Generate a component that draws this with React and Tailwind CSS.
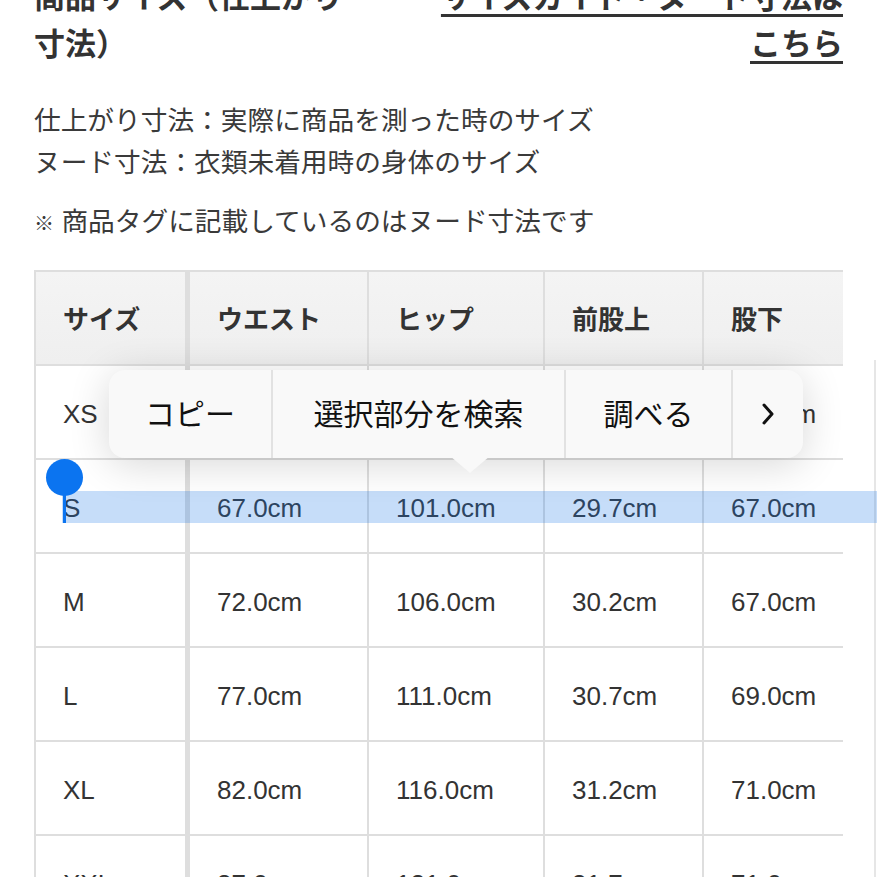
import React from "react";

const rows = [
  ["XS", "62.0cm", "96.0cm", "29.2cm", "65.0cm"],
  ["S", "67.0cm", "101.0cm", "29.7cm", "67.0cm"],
  ["M", "72.0cm", "106.0cm", "30.2cm", "67.0cm"],
  ["L", "77.0cm", "111.0cm", "30.7cm", "69.0cm"],
  ["XL", "82.0cm", "116.0cm", "31.2cm", "71.0cm"],
  ["XXL", "87.0cm", "121.0cm", "31.7cm", "71.0cm"],
];

const cols = "grid grid-cols-[154px_179px_176px_159px_160px]";

const Row = ({ cells, head }) => (
  <div
    className={`${cols} ${head ? "h-[94px] bg-gradient-to-b from-[#f4f4f4] to-[#efefef] font-bold" : "h-[94px]"} border-b-2 border-[#dedede]`}
  >
    {cells.map((c, i) => (
      <div
        key={i}
        className={`flex items-center pl-[27px] pt-[5px] ${i === 0 ? "border-r-[5px]" : "border-r-2"} border-[#dedede]`}
      >
        {c}
      </div>
    ))}
  </div>
);

const App = () => {
  return (
    <div
      className="relative w-[877px] h-[877px] overflow-hidden bg-white text-[#333]"
      style={{ fontFamily: '"Liberation Sans", "Noto Sans CJK JP", sans-serif' }}
    >
      <div className="px-[34px] mt-[-26px]">
        {/* heading */}
        <div className="flex justify-between text-[31px] font-bold leading-[47px]">
          <h2 className="w-[318px]">商品サイズ（仕上がり寸法）</h2>
          <a className="w-[420px] text-right underline underline-offset-[6px]">
            サイズガイド・ヌード寸法はこちら
          </a>
        </div>

        <div className="mt-[32px] text-[26.7px] leading-[42px] text-[#3a3a3a]">
          <p>仕上がり寸法：実際に商品を測った時のサイズ</p>
          <p>ヌード寸法：衣類未着用時の身体のサイズ</p>
          <p className="mt-[17px]">
            <span className="text-[20px]">※</span> 商品タグに記載しているのはヌード寸法です
          </p>
        </div>

        {/* size table */}
        <div className="mt-[25px] overflow-hidden border-t-2 border-l-2 border-[#dedede] text-[26px]">
          <Row head cells={["サイズ", "ウエスト", "ヒップ", "前股上", "股下"]} />
          {rows.map((r) => (
            <Row key={r[0]} cells={r} />
          ))}
        </div>
      </div>

      {/* right frame edge */}
      <div className="absolute right-[1px] top-[360px] bottom-0 w-[2px] bg-[#e6e6e6]" />

      {/* text selection */}
      <div className="absolute left-[62px] right-0 top-[491px] h-[32px] bg-[rgba(28,120,230,0.25)]" />
      <div className="absolute left-[63px] top-[478px] w-[3px] h-[45px] bg-[#0b74f0]" />
      <div className="absolute left-[46px] top-[459px] w-[37px] h-[37px] rounded-full bg-[#0b74f0]" />

      {/* context menu */}
      <div className="absolute left-[109px] top-[370px] w-[694px] h-[88px] rounded-[16px] bg-[#f9f9f9] shadow-[0_6px_40px_rgba(0,0,0,0.16)] flex text-[30px] text-[#111]">
        <div className="w-[164px] flex items-center justify-center border-r-2 border-[#e2e2e2]">コピー</div>
        <div className="w-[293px] flex items-center justify-center border-r-2 border-[#e2e2e2]">選択部分を検索</div>
        <div className="w-[167px] flex items-center justify-center border-r-2 border-[#e2e2e2]">調べる</div>
        <div className="flex-1 flex items-center justify-center">
          <svg width="14" height="24" viewBox="0 0 14 24" fill="none">
            <path d="M3 3 L11 12 L3 21" stroke="#111" strokeWidth="3" strokeLinecap="round" strokeLinejoin="round" />
          </svg>
        </div>
        <div className="absolute left-[341px] top-[86px] w-0 h-0 border-l-[20px] border-r-[20px] border-t-[17px] border-l-transparent border-r-transparent border-t-[#f9f9f9]" />
      </div>
    </div>
  );
};

export default App;
